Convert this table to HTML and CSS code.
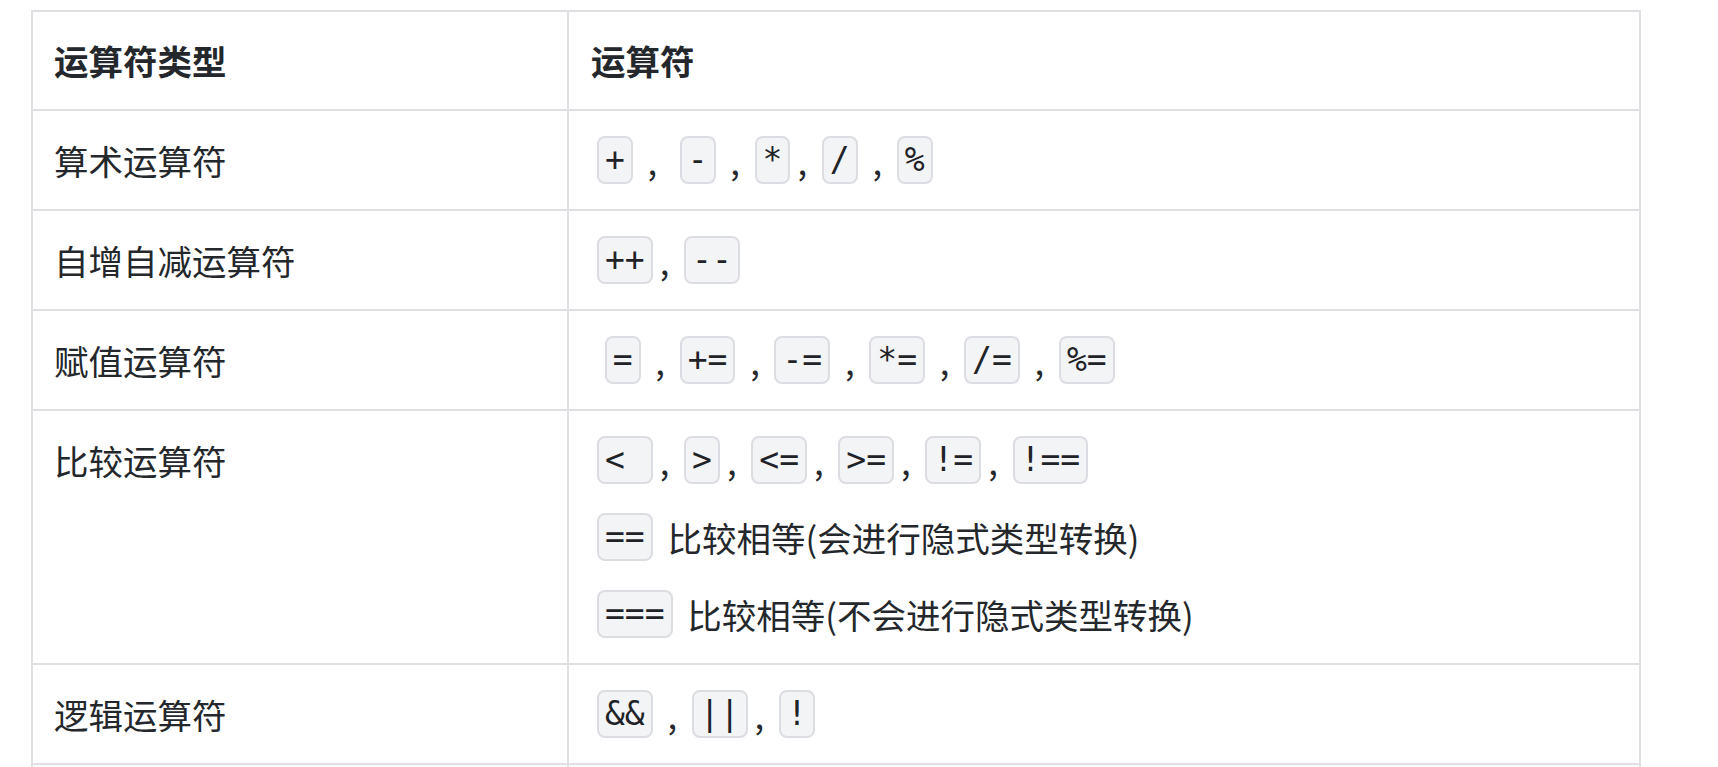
FILE: index.html
```html
<!DOCTYPE html>
<html lang="zh-CN">
<head>
<meta charset="utf-8">
<title>运算符</title>
<link rel="stylesheet" href="styles.css">
</head>
<body>
<div class="page">
<table class="ops">
  <colgroup><col class="col-type"><col class="col-ops"></colgroup>
  <thead>
    <tr><th>运算符类型</th><th>运算符</th></tr>
  </thead>
  <tbody>
    <tr>
      <td><div class="line">算术运算符</div></td>
      <td><div class="line"><code>+</code> , &nbsp;<code>-</code> , <code>*</code>, <code>/</code> , <code>%</code></div></td>
    </tr>
    <tr>
      <td><div class="line">自增自减运算符</div></td>
      <td><div class="line"><code>++</code>, <code>--</code></div></td>
    </tr>
    <tr>
      <td><div class="line">赋值运算符</div></td>
      <td><div class="line">&nbsp;<code>=</code> , <code>+=</code> , <code>-=</code> , <code>*=</code> , <code>/=</code> , <code>%=</code></div></td>
    </tr>
    <tr>
      <td><div class="line">比较运算符</div></td>
      <td>
        <div class="lines">
          <div class="line"><code>&lt; </code>, <code>&gt;</code>, <code>&lt;=</code>, <code>&gt;=</code>, <code>!=</code>, <code>!==</code></div>
          <div class="line"><code>==</code> 比较相等(会进行隐式类型转换)</div>
          <div class="line"><code>===</code> 比较相等(不会进行隐式类型转换)</div>
        </div>
      </td>
    </tr>
    <tr>
      <td><div class="line">逻辑运算符</div></td>
      <td><div class="line"><code>&amp;&amp;</code> , <code>||</code>, <code>!</code></div></td>
    </tr>
    <tr class="blank">
      <td><div class="line"></div></td>
      <td><div class="line"></div></td>
    </tr>
  </tbody>
</table>
</div>
</body>
</html>
```

FILE: styles.css
```css
html, body {
  margin: 0;
  padding: 0;
  background: #ffffff;
}

.page {
  padding: 10px 0 0 31px;
}

.ops {
  border-collapse: separate;
  border-spacing: 0;
  table-layout: fixed;
  width: 1610px;
  border-left: 2px solid #dfe0e4;
  border-top: 2px solid #dfe0e4;
  font-family: "Noto Sans CJK SC", "Noto Sans", sans-serif;
  font-size: 34.5px;
  color: #24272b;
}

.col-type { width: 536px; }
.col-ops { width: 1072px; }

.ops th,
.ops td {
  border-right: 2px solid #dfe0e4;
  border-bottom: 2px solid #dfe0e4;
  padding: 25px 20px 25px 21px;
  text-align: left;
  vertical-align: top;
  line-height: 48px;
  box-sizing: border-box;
}

.ops th + th {
  padding-left: 22px;
}

.ops td + td {
  padding-left: 21px;
}

.ops th {
  font-weight: 700;
  height: 99px;
  padding-top: 24px;
  padding-bottom: 24px;
}

.line {
  height: 48px;
  line-height: 48px;
  white-space: nowrap;
}

.lines {
  display: flex;
  flex-direction: column;
  gap: 29px;
}

code {
  display: inline-block;
  vertical-align: top;
  font-family: "DejaVu Sans Mono", "Liberation Mono", monospace;
  font-size: 33px;
  line-height: 44px;
  height: 44px;
  padding: 0 6px;
  margin: 0 7px;
  background: #f3f4f6;
  border: 2px solid #dcdde2;
  border-radius: 8px;
  color: #1f2328;
  white-space: pre;
}
```
